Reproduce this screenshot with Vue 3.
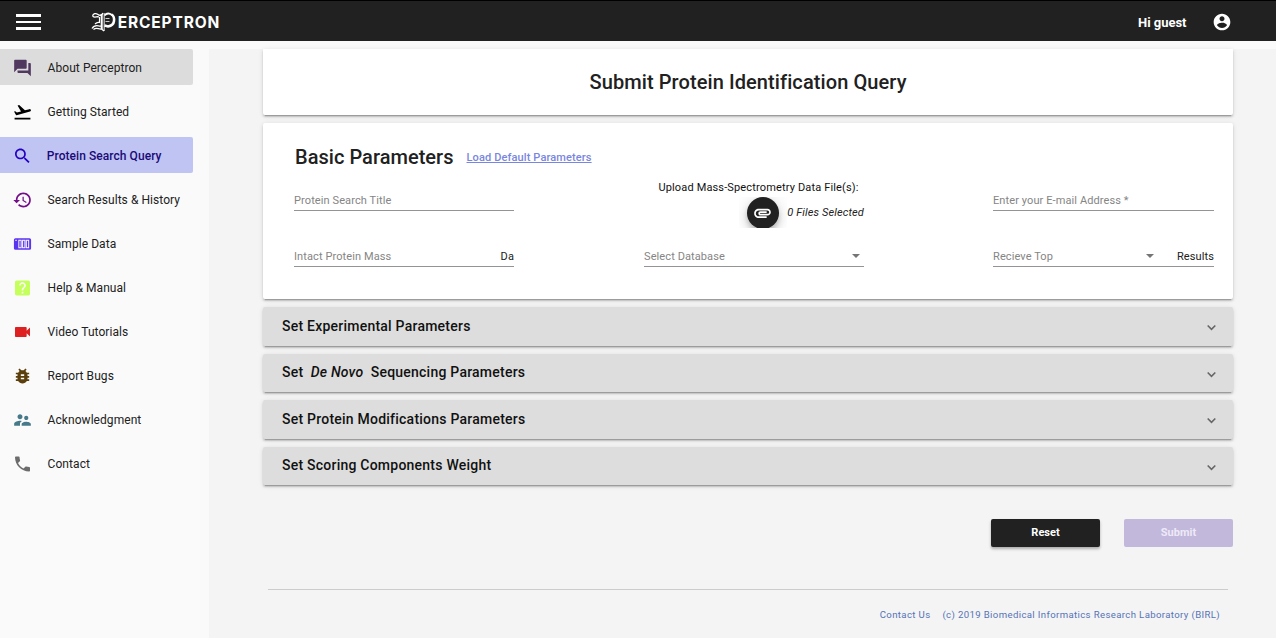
<script setup>
const nav = [
  { label: 'About Perceptron', color: '#51385f', state: 'hovered', d: 'M21 6h-2v9H6v2c0 .55.45 1 1 1h11l4 4V7c0-.55-.45-1-1-1zm-4 6V3c0-.55-.45-1-1-1H3c-.55 0-1 .45-1 1v14l4-4h10c.55 0 1-.45 1-1z' },
  { label: 'Getting Started', color: '#000', d: 'M2.5 19h19v2h-19zm19.57-9.36c-.21-.8-1.04-1.28-1.84-1.06L14.92 10l-6.9-6.43-1.93.51 4.14 7.17-4.97 1.33-1.97-1.54-1.45.39 1.82 3.16.77 1.33 1.6-.43 5.31-1.42 4.35-1.16L21 11.49c.81-.23 1.28-1.05 1.07-1.85z' },
  { label: 'Protein Search Query', color: '#2500c4', state: 'active', d: 'M15.5 14h-.79l-.28-.27C15.41 12.59 16 11.11 16 9.5 16 5.91 13.09 3 9.5 3S3 5.91 3 9.5 5.91 16 9.5 16c1.61 0 3.09-.59 4.23-1.57l.27.28v.79l5 4.99L20.49 19l-4.99-5zm-6 0C7.01 14 5 11.99 5 9.5S7.01 5 9.5 5 14 7.01 14 9.5 11.99 14 9.5 14z' },
  { label: 'Search Results & History', color: '#730d88', d: 'M13 3c-4.97 0-9 4.03-9 9H1l3.89 3.89.07.14L9 12H6c0-3.87 3.13-7 7-7s7 3.13 7 7-3.13 7-7 7c-1.93 0-3.68-.79-4.94-2.06l-1.42 1.42C8.27 19.99 10.51 21 13 21c4.97 0 9-4.03 9-9s-4.03-9-9-9zm-1 5v5l4.28 2.54.72-1.21-3.5-2.08V8H12z' },
  { label: 'Sample Data', color: '#5a35ef', d: 'M3.5 5h17A1.8 1.8 0 0 1 22.3 6.8v10.400A1.800 1.800 0 0 1 20.500 19h-17A1.800 1.800 0 0 1 1.700 17.200V6.800A1.800 1.800 0 0 1 3.500 5zM3.500 7v1.500H5V7zM7 7v10h4V7zm1.200 1.200h1.600v7.600H8.200zM11.500 7v10h4V7zm1.200 1.200h1.600v7.600h-1.600zM16 7v10h4V7zm1.200 1.200h1.600v7.600h-1.600z' },
  { label: 'Help & Manual', color: '#c5ff5b', d: 'M19 3H5c-1.100 0-2 .9-2 2v14c0 1.100.9 2 2 2h14c1.100 0 2-.9 2-2V5c0-1.100-.9-2-2-2zm-6 15.500h-2v-2h2v2zm2.070-7.250-.9.920C13.450 12.900 13 13.500 13 15h-2v-.5c0-1.100.450-2.100 1.170-2.830l1.240-1.260c.370-.360.590-.860.590-1.410 0-1.100-.9-2-2-2s-2 .9-2 2H8c0-2.210 1.790-4 4-4s4 1.790 4 4c0 .880-.360 1.680-.930 2.250z' },
  { label: 'Video Tutorials', color: '#df2020', d: 'M17 10.500V7c0-.550-.450-1-1-1H4c-.550 0-1 .450-1 1v10c0 .550.450 1 1 1h12c.550 0 1-.450 1-1v-3.500l4 4v-11l-4 4z' },
  { label: 'Report Bugs', color: '#5c400c', d: 'M20 8h-2.810c-.450-.780-1.070-1.450-1.820-1.960L17 4.410 15.590 3l-2.170 2.170C12.960 5.060 12.490 5 12 5s-.960.060-1.410.170L8.410 3 7 4.410l1.620 1.630C7.880 6.550 7.260 7.220 6.810 8H4v2h2.090c-.050.330-.090.660-.090 1v1H4v2h2v1c0 .340.040.670.090 1H4v2h2.810c1.040 1.790 2.970 3 5.190 3s4.150-1.210 5.190-3H20v-2h-2.090c.050-.330.090-.660.090-1v-1h2v-2h-2v-1c0-.340-.040-.670-.090-1H20V8zm-6 8h-4v-2h4v2zm0-4h-4v-2h4v2z' },
  { label: 'Acknowledgment', color: '#46798a', d: 'M16.500 12c1.380 0 2.490-1.120 2.490-2.500S17.880 7 16.500 7 14 8.120 14 9.500s1.120 2.500 2.500 2.500zM9 11c1.660 0 2.990-1.340 2.990-3S10.660 5 9 5 6 6.340 6 8s1.340 3 3 3zm7.500 3c-1.830 0-5.500.920-5.500 2.750V19h11v-2.250c0-1.830-3.670-2.750-5.500-2.750zM9 13c-2.330 0-7 1.170-7 3.500V19h7v-2.250c0-.850.330-2.340 2.370-3.470C10.500 13.100 9.660 13 9 13z' },
  { label: 'Contact', color: '#6c6c6c', d: 'M6.620 10.790c1.440 2.830 3.760 5.140 6.590 6.590l2.200-2.200c.270-.270.670-.360 1.020-.240 1.120.370 2.330.570 3.570.570.550 0 1 .450 1 1V20c0 .550-.450 1-1 1-9.390 0-17-7.610-17-17 0-.550.450-1 1-1h3.500c.550 0 1 .450 1 1 0 1.250.200 2.450.570 3.570.110.350.030.740-.250 1.020l-2.200 2.200z' },
]
const panels = [
  { before: 'Set Experimental Parameters' },
  { before: 'Set', em: 'De Novo', after: 'Sequencing Parameters' },
  { before: 'Set Protein Modifications Parameters' },
  { before: 'Set Scoring Components Weight' },
]
</script>

<template>
  <div class="app">
    <header class="bar">
      <div class="burger"><i></i><i></i><i></i></div>
      <div class="logo">
        <svg class="crest" width="26" height="22" viewBox="0 0 26 22" fill="none" stroke="#fff">
          <path d="M1.500 5.500C2 2 5 2 7 3.500s4 .5 5-1.500M2 5.500c2 1.500 4-.5 6 .5" stroke-width="1.300" />
          <path d="M8.500 6v5.500c-1.500-.5-3 0-4.500 1.500" stroke-width="1.200" />
          <path d="M10.700 3v15" stroke-width="2" />
          <path d="M13.200 2v18" stroke-width="1.200" stroke="#ccc" />
          <path d="M1 17.500C4 12.500 7 15.500 10.500 15M2.500 18.500c3-2.500 5 0 8-.5l2.500 2" stroke-width="1.300" />
          <path d="M13.500 4.500C16 1.500 19 2.500 21 4" stroke-width="1.800" />
          <path d="M20.500 3.500c2.600 1.500 2.800 4 2.500 6.500-.3 3-3.300 5-6 5.500l-3.500-1" stroke-width="2.500" />
          <path d="M14.500 7.500h4M14.500 10.500h4" stroke-width="1" stroke="#ccc" />
        </svg>
        <span>ERCEPTRON</span>
      </div>
      <span class="hello">Hi guest</span>
      <svg class="user" width="20" height="20" viewBox="0 0 24 24" fill="#fff"><path d="M12 2C6.480 2 2 6.480 2 12s4.480 10 10 10 10-4.480 10-10S17.520 2 12 2zm0 3c1.660 0 3 1.340 3 3s-1.340 3-3 3-3-1.340-3-3 1.340-3 3-3zm0 14.200c-2.500 0-4.710-1.280-6-3.220.030-1.990 4-3.080 6-3.080 1.990 0 5.970 1.090 6 3.080-1.290 1.940-3.500 3.220-6 3.220z" /></svg>
    </header>
    <div class="body">
      <nav class="side">
        <a v-for="n in nav" :key="n.label" class="item" :class="n.state">
          <svg width="20" height="20" viewBox="0.6 0 24 24" fill-rule="evenodd" :fill="n.color"><path :d="n.d" /></svg>
          <span>{{ n.label }}</span>
        </a>
      </nav>
      <main class="main">
        <section class="card title"><h1>Submit Protein Identification Query</h1></section>
        <section class="card basic">
          <div class="head">
            <h2>Basic Parameters</h2>
            <a class="load">Load Default Parameters</a>
          </div>
          <div class="row first">
            <div class="field"><span class="ph">Protein Search Title</span></div>
            <div class="upload">
              <div class="uplabel">Upload Mass-Spectrometry Data File(s):</div>
              <div class="upline">
                <div class="clip">
                  <div class="fab">
                    <svg width="20" height="20" viewBox="0.6 0 24 24" fill="#fff"><path d="M2 12.500C2 9.460 4.460 7 7.500 7H18c2.210 0 4 1.790 4 4s-1.790 4-4 4H9.500C8.120 15 7 13.880 7 12.500S8.120 10 9.500 10H17v2H9.410c-.550 0-.550 1 0 1H18c1.100 0 2-.9 2-2s-.9-2-2-2H7.500C5.570 9 4 10.570 4 12.500S5.570 16 7.500 16H17v2H7.500C4.460 18 2 15.540 2 12.500z" /></svg>
                  </div>
                </div>
                <em>0 Files Selected</em>
              </div>
            </div>
            <div class="field last"><span class="ph">Enter your E-mail Address *</span></div>
          </div>
          <div class="row second">
            <div class="field"><span class="ph">Intact Protein Mass</span><span class="sfx">Da</span></div>
            <div class="field"><span class="ph">Select Database</span><i class="caret"></i></div>
            <div class="field last"><span class="ph">Recieve Top</span><i class="caret"></i><span class="sfx results">Results</span></div>
          </div>
        </section>
        <section v-for="p in panels" :key="p.before" class="card panel">
          <h3>{{ p.before }}<template v-if="p.em"><em>{{ p.em }}</em>{{ p.after }}</template></h3>
          <svg width="11" height="8" viewBox="0 0 11 8" fill="none" stroke="#666" stroke-width="1.600"><path d="M1.700 1.500l3.800 3.800 3.800-3.800" /></svg>
        </section>
        <div class="actions">
          <button class="btn reset">Reset</button>
          <button class="btn submit">Submit</button>
        </div>
        <footer class="foot">
          <a>Contact Us</a><span>(c) 2019 Biomedical Informatics Research Laboratory (BIRL)</span>
        </footer>
      </main>
    </div>
  </div>
</template>

<style>
body { background: #fafafa; overflow: hidden; }
</style>
<style scoped>
.app { height: 638px; display: flex; flex-direction: column; font-family: Roboto, "Liberation Sans", sans-serif; color: #212121; overflow: hidden; }
.app * { box-sizing: border-box; }
.bar { height: 41px; flex: none; background: #212121; border-top: 1px solid #000; display: flex; align-items: center; padding: 2px 44px 0 16.400px; color: #fff; }
.burger { width: 25px; display: flex; flex-direction: column; gap: 4px; }
.burger i { height: 2.500px; background: #fff; }
.logo { margin-left: 50px; display: flex; align-items: center; }
.logo span { font: 700 15.500px Inter, sans-serif; letter-spacing: .85px; margin-left: .3px; padding-top: 1px; }
.hello { margin-left: auto; font-size: 13px; font-weight: 700; letter-spacing: -.03px; padding: 1px .5px 0 0; }
.user { margin-left: 25px; }
.body { flex: 1; display: flex; padding-top: 8px; min-height: 0; }
.side { width: 209px; flex: none; display: flex; flex-direction: column; gap: 8px; }
.item { width: 193px; height: 36px; flex: none; display: flex; align-items: center; border-radius: 0 2px 2px 0; font-size: 12px; color: #212121; padding-left: 12.800px; gap: 14.800px; letter-spacing: .06px; }
.item span { padding-top: 2px; }
.item svg { margin-top: 2px; flex: none; }
.item.hovered { background: #dcdcdc; }
.item.active { background: #bfc4f2; color: #1b0a78; font-weight: 500; gap: 14px; }
.main { flex: 1; background: #f4f4f4; padding: 0 43.500px 0 54px; display: flex; flex-direction: column; }
.card { background: #fff; flex: none; width: 970px; box-shadow: 0 3px 1px -2px rgba(0,0,0,.2), 0 2px 2px 0 rgba(0,0,0,.14), 0 1px 5px 0 rgba(0,0,0,.12); border-radius: 2px; }
h1, h2, h3 { margin: 0; font-weight: 500; }
.title { height: 66px; display: flex; justify-content: center; align-items: center; border-radius: 0 0 2px 2px; }
h1 { font-size: 20px; letter-spacing: .09px; }
.basic { height: 176px; margin-top: 8px; padding: 0 19px 0 31px; }
.head { display: flex; align-items: center; height: 50px; padding: 18px 0 0 1px; gap: 13px; }
h2 { font-size: 20px; letter-spacing: .03px; }
.load { font-size: 11px; font-weight: 500; color: #7986e0; text-decoration: underline; letter-spacing: .12px; }
.row { display: grid; grid-template-columns: 220px 220px 221px; column-gap: 130px; }
.row.first { height: 55px; }
.field { height: 20px; border-bottom: 1px solid #949494; display: flex; align-items: center; font-size: 11px; letter-spacing: .1px; }
.last { margin-left: -1px; width: 221px; }
.first .field { margin-top: 18px; }
.second { margin-top: 19px; }
.ph { color: #858585; flex: 1; }
.caret { border: 4px solid transparent; border-top-color: #757575; border-bottom: 0; margin: -1px 4px 0 0; }
.results { margin-left: 19px; }
.upload { font-size: 11px; }
.uplabel { text-align: right; padding: 8px 5.400px 0 0; height: 24px; letter-spacing: .15px; color: #111; }
.upline { display: flex; justify-content: flex-end; align-items: center; }
.upline em { letter-spacing: .13px; color: #222; }
.clip { height: 31px; padding: 0 8px; overflow: hidden; }
.fab { width: 32px; height: 32px; border-radius: 50%; background: #212121; display: grid; place-items: center; box-shadow: 0 3px 5px -1px rgba(0,0,0,.2), 0 6px 10px rgba(0,0,0,.14), 0 1px 18px rgba(0,0,0,.12); }
.panel { height: 38.700px; margin-top: 7.800px; background: #ddd; display: flex; justify-content: space-between; align-items: center; padding: 0 16px 0 19px; }
.basic + .panel { margin-top: 8.100px; }
h3 { font-size: 14px; color: #111; letter-spacing: .23px; padding-bottom: 1px; }
h3 em { margin: 0 7.300px; }
.panel svg { margin-top: 4px; }
.actions { margin-top: 33.700px; width: 970px; display: flex; justify-content: flex-end; gap: 24px; }
.btn { width: 109px; height: 28px; border: 0; padding: 0; border-radius: 2px; color: #fff; font: 700 11px Roboto, sans-serif; }
.reset { background: #212121; box-shadow: 0 2px 3px rgba(0,0,0,.3); }
.submit { background: #c2b8dc; color: #eee9f7; }
.foot { width: 960px; margin: 42px 0 0 5px; border-top: 1px solid #ccc; padding: 19px 8px 0 0; display: flex; justify-content: flex-end; gap: 12px; font-size: 9.600px; letter-spacing: .37px; color: #5573b7; }
</style>
